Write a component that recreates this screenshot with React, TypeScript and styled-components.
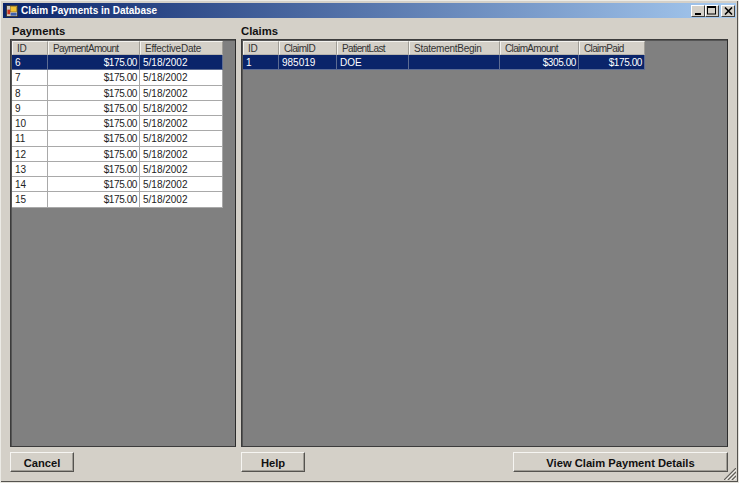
import React from "react";
import styled, { createGlobalStyle } from "styled-components";

const Global = createGlobalStyle`
  html, body { margin: 0; padding: 0; background: #d4d0c8; }
  #root { width: 739px; height: 483px; }
`;

const Win = styled.div`
  box-sizing: border-box;
  width: 739px;
  height: 483px;
  display: flex;
  flex-direction: column;
  background: #d4d0c8;
  font-family: "Liberation Sans", Arial, sans-serif;
  padding: 3px 3px 2px 3px;
  box-shadow:
    inset 1px 1px 0 #ecebe6,
    inset -1px -1px 0 #e4e2dc,
    inset -2px -2px 0 #55534f;
  overflow: hidden;
`;

const TitleBar = styled.div`
  flex: 0 0 15px;
  display: flex;
  align-items: center;
  padding: 0 1px 0 3px;
  gap: 3px;
  background: linear-gradient(90deg, #0a246a 0%, #a6caf0 100%);
`;

const TitleText = styled.span`
  flex: 1;
  color: #fff;
  font-size: 10px;
  line-height: 13px;
  padding-bottom: 1px;
  font-weight: 700;
  white-space: nowrap;
`;

const CaptionGroup = styled.div`
  display: flex;
`;

const CaptionButton = styled.div<{ $gap?: number }>`
  box-sizing: border-box;
  width: 14px;
  height: 12px;
  margin-left: ${(p) => p.$gap ?? 0}px;
  background: #d4d0c8;
  border-style: solid;
  border-width: 1px;
  border-color: #fff #404040 #404040 #fff;
  display: flex;
  align-items: center;
  justify-content: center;
  svg { display: block; }
`;

const Body = styled.div`
  flex: 1;
  display: flex;
  flex-direction: column;
  padding: 6px 8px 9px 7px;
`;

const Columns = styled.div`
  flex: 1;
  display: flex;
  gap: 5px;
  min-height: 0;
`;

const Section = styled.section<{ $w?: number }>`
  display: flex;
  flex-direction: column;
  ${(p) => (p.$w ? `flex: 0 0 ${p.$w}px;` : "flex: 1;")}
`;

const Label = styled.div<{ $inset?: number }>`
  flex: 0 0 14px;
  font-size: 11.3px;
  font-weight: 700;
  line-height: 14px;
  color: #111;
  margin-bottom: 1px;
  padding-left: ${(p) => p.$inset ?? 0}px;
`;

const Grid = styled.div`
  box-sizing: border-box;
  flex: 1;
  background: #808080;
  border-style: solid;
  border-width: 1px;
  border-color: #3c3c3c #2c2c2c #3c3c3c #3c3c3c;
  box-shadow: inset 1px 1px 0 #555;
  padding: 1px 0 0 1px;
`;

const Row = styled.div<{ $tpl: string }>`
  display: grid;
  grid-template-columns: ${(p) => p.$tpl};
  width: max-content;
`;

const HeadCell = styled.div<{ $tight?: boolean }>`
  box-sizing: border-box;
  height: 14px;
  background: #d4d0c8;
  border-top: 1px solid #f4f3ef;
  border-left: 1px solid #f4f3ef;
  border-right: 1px solid #a09d96;
  border-bottom: 1px solid #b8b5ae;
  font-size: 10px;
  line-height: 13px;
  color: #333;
  padding-left: 4px;
  white-space: nowrap;
  letter-spacing: ${(p) => (p.$tight ? "-0.65px" : "-0.25px")};
`;

const Cell = styled.div<{ $sel?: boolean; $right?: boolean }>`
  box-sizing: border-box;
  height: 15.25px;
  background: ${(p) => (p.$sel ? "#0a246a" : "#fff")};
  color: ${(p) => (p.$sel ? "#fff" : "#222")};
  border-right: 1px solid ${(p) => (p.$sel ? "#5d6c93" : "#a9a9a9")};
  border-bottom: 1px solid ${(p) => (p.$sel ? "#5d6c93" : "#a9a9a9")};
  font-size: 10px;
  line-height: 16px;
  padding: 0 ${(p) => (p.$right ? "2px" : "3px")};
  letter-spacing: ${(p) => (p.$right ? "-0.4px" : "0")};
  text-align: ${(p) => (p.$right ? "right" : "left")};
  white-space: nowrap;
  overflow: hidden;
`;

const Footer = styled.div`
  flex: 0 0 25px;
  display: flex;
  align-items: flex-end;
`;

const Button = styled.button<{ $w: number; $ml?: number; $auto?: boolean }>`
  box-sizing: border-box;
  width: ${(p) => p.$w}px;
  height: 20px;
  margin-left: ${(p) => (p.$auto ? "auto" : `${p.$ml ?? 0}px`)};
  background: #d4d0c8;
  border-style: solid;
  border-width: 1px;
  border-color: #f6f5f2 #55534f #55534f #f6f5f2;
  box-shadow: inset -1px -1px 0 #a09d96;
  font-family: "Liberation Sans", Arial, sans-serif;
  font-size: 11.2px;
  font-weight: 700;
  color: #111;
  padding: 2px 0 0;
  text-align: center;
`;

const Grip = styled.svg`
  position: absolute;
  right: 3px;
  bottom: 3px;
`;

const Relative = styled.div`
  position: relative;
`;

const payCols = "36px 92px 83px";
const claimCols = "36px 58px 72px 91px 79px 66px";
const payments = [6, 7, 8, 9, 10, 11, 12, 13, 14, 15];

const WinIcon = () => (
  <svg width="12" height="12" viewBox="0 0 13 13">
    <rect x="0" y="0" width="13" height="13" fill="#cfcbc0" />
    <rect x="0.5" y="0.5" width="12" height="12" fill="none" stroke="#333" />
    <rect x="5" y="1.5" width="6.5" height="6" fill="#f1c232" stroke="#8a6a10" strokeWidth="0.6" />
    <rect x="1.5" y="5" width="3" height="5" fill="#c8321e" />
    <rect x="5" y="8.5" width="6.5" height="3" fill="#3c5fae" />
  </svg>
);

export default function App() {
  return (
    <>
      <Global />
      <Relative>
        <Win>
          <TitleBar>
            <WinIcon />
            <TitleText>Claim Payments in Database</TitleText>
            <CaptionGroup>
              <CaptionButton>
                <svg width="8" height="8"><rect x="1" y="6" width="6" height="2" fill="#000" /></svg>
              </CaptionButton>
              <CaptionButton>
                <svg width="10" height="9"><rect x="0.5" y="0.5" width="8" height="7.5" fill="none" stroke="#000" /><rect x="0" y="0" width="9" height="2" fill="#000" /></svg>
              </CaptionButton>
              <CaptionButton $gap={2}>
                <svg width="9" height="8"><path d="M1 0.5 L8 7.5 M8 0.5 L1 7.5" stroke="#000" strokeWidth="1.6" /></svg>
              </CaptionButton>
            </CaptionGroup>
          </TitleBar>
          <Body>
            <Columns>
              <Section $w={226}>
                <Label $inset={2}>Payments</Label>
                <Grid>
                  <Row $tpl={payCols}>
                    <HeadCell>ID</HeadCell>
                    <HeadCell $tight>PaymentAmount</HeadCell>
                    <HeadCell>EffectiveDate</HeadCell>
                  </Row>
                  {payments.map((id, i) => (
                    <Row $tpl={payCols} key={id}>
                      <Cell $sel={i === 0}>{id}</Cell>
                      <Cell $sel={i === 0} $right>$175.00</Cell>
                      <Cell $sel={i === 0}>5/18/2002</Cell>
                    </Row>
                  ))}
                </Grid>
              </Section>
              <Section>
                <Label>Claims</Label>
                <Grid>
                  <Row $tpl={claimCols}>
                    <HeadCell>ID</HeadCell>
                    <HeadCell $tight>ClaimID</HeadCell>
                    <HeadCell $tight>PatientLast</HeadCell>
                    <HeadCell>StatementBegin</HeadCell>
                    <HeadCell $tight>ClaimAmount</HeadCell>
                    <HeadCell $tight>ClaimPaid</HeadCell>
                  </Row>
                  <Row $tpl={claimCols}>
                    <Cell $sel>1</Cell>
                    <Cell $sel>985019</Cell>
                    <Cell $sel>DOE</Cell>
                    <Cell $sel></Cell>
                    <Cell $sel $right>$305.00</Cell>
                    <Cell $sel $right>$175.00</Cell>
                  </Row>
                </Grid>
              </Section>
            </Columns>
            <Footer>
              <Button $w={64}>Cancel</Button>
              <Button $w={64} $ml={167}>Help</Button>
              <Button $w={215} $auto>View Claim Payment Details</Button>
            </Footer>
          </Body>
        </Win>
        <Grip width="12" height="12" viewBox="0 0 12 12">
          <path d="M12 0 L0 12 M12 4 L4 12 M12 8 L8 12" stroke="#5f5d58" strokeWidth="1.1" />
          <path d="M12 2 L2 12 M12 6 L6 12 M12 10 L10 12" stroke="#f2f1ed" strokeWidth="1" />
        </Grip>
      </Relative>
    </>
  );
}
